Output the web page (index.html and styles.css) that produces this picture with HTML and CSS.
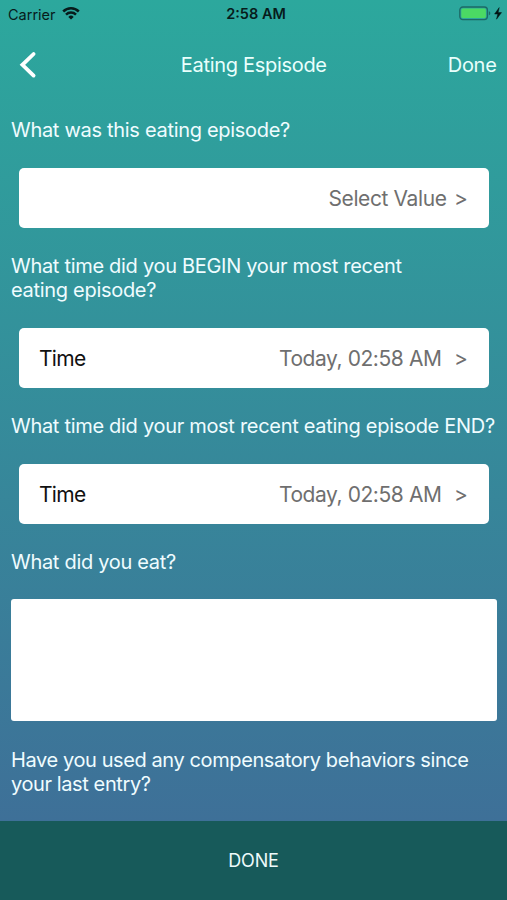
FILE: index.html
```html
<!DOCTYPE html>
<html lang="en">
<head>
<meta charset="utf-8">
<title>Eating Espisode</title>
<link rel="stylesheet" href="styles.css">
</head>
<body>
<div class="screen">
  <div class="status">
    <div class="status-left">
      <span class="carrier">Carrier</span>
      <svg class="wifi" width="18" height="13" viewBox="0 0 18 13" fill="none" stroke="#071b1b" stroke-width="2.5">
        <path d="M1.2 4.5a11.2 11.2 0 0 1 15.6 0"/>
        <path d="M4 7.6a7.2 7.2 0 0 1 10 0"/>
        <path d="M9 12.6 6.3 9.9a3.9 3.9 0 0 1 5.4 0z" fill="#071b1b" stroke="none"/>
      </svg>
    </div>
    <span class="clock">2:58 AM</span>
    <div class="status-right">
      <svg width="44" height="16" viewBox="0 0 44 16">
        <rect x=".8" y="1" width="27.6" height="12.6" rx="3" fill="none" stroke="#1d6965" stroke-width="1.3"/>
        <rect x="2.3" y="2.5" width="24.6" height="9.6" rx="1.5" fill="#4bd964"/>
        <path d="M29.8 5.3c2 .5 2 3.5 0 4z" fill="#1d6965"/>
        <path d="M40.2 1.6 35.6 8h3.2l-1.3 5.2 5-6.6h-3.4z" fill="#031414" stroke="#031414" stroke-width=".5"/>
      </svg>
    </div>
  </div>
  <header class="nav">
    <div class="back"><svg width="20" height="28" viewBox="0 0 20 28" fill="none" stroke="#fff" stroke-width="3.8" stroke-linecap="round"><path d="M15.6 3 4.4 13.8l11.2 10.8"/></svg></div>
    <h1 class="title">Eating Espisode</h1>
    <span class="nav-done">Done</span>
  </header>
  <main class="form">
    <p class="question">What was this eating episode?</p>
    <div class="card"><span></span><span class="value select"><span>Select Value</span><span>&gt;</span></span></div>
    <p class="question">What time did you BEGIN your most recent<br>eating episode?</p>
    <div class="card"><span class="name">Time</span><span class="value"><span>Today, 02:58 AM</span><span>&gt;</span></span></div>
    <p class="question">What time did your most recent eating episode END?</p>
    <div class="card"><span class="name">Time</span><span class="value"><span>Today, 02:58 AM</span><span>&gt;</span></span></div>
    <p class="question">What did you eat?</p>
    <div class="notes"></div>
    <p class="question last">Have you used any compensatory behaviors since<br>your last entry?</p>
  </main>
  <footer class="footer"><span>DONE</span></footer>
</div>
</body>
</html>
```

FILE: styles.css
```css
* { box-sizing: border-box; }
body { margin: 0; font-family: Inter, "Liberation Sans", sans-serif; }
.screen {
  display: flex;
  flex-direction: column;
  width: 507px;
  height: 900px;
  overflow: hidden;
  background: linear-gradient(#2ca89d 0, #3e7098 820px);
}
.status {
  display: grid;
  grid-template-columns: 1fr auto 1fr;
  align-items: center;
  height: 28px;
  padding: 0 4px 0 8px;
  color: #071b1b;
  font-size: 14.5px;
}
.status-left { display: flex; align-items: center; gap: 6px; }
.wifi { margin-top: -2px; }
.clock { font-weight: 600; margin-left: 1px; margin-top: -1px; }
.status-right { display: flex; justify-content: flex-end; }
.nav {
  display: grid;
  grid-template-columns: 1fr auto 1fr;
  align-items: center;
  height: 73px;
  padding: 0 10.5px 0 18px;
  color: #e9fffc;
  font-size: 20px;
  letter-spacing: -.3px;
}
.back { display: flex; }
.title { margin: 0 7px 0 0; font-size: 20px; font-weight: 400; }
.nav-done { text-align: right; }
.form { flex: 1; padding: 17px 10px 0 11px; }
.question {
  margin: 0;
  font-size: 20px;
  line-height: 24.2px;
  letter-spacing: -.3px;
  color: #effcff;
  white-space: nowrap;
}
.last { letter-spacing: -.4px; }
.card {
  display: flex;
  align-items: center;
  justify-content: space-between;
  height: 59.6px;
  margin: 26px 8px;
  padding: 1px 21.5px 0 20px;
  background: #fff;
  border-radius: 5px;
  font-size: 21px;
  letter-spacing: -.42px;
}
.name { color: #111; letter-spacing: -.7px; }
.value { display: flex; gap: 12.5px; color: #6f6f6f; }
.select { gap: 7.5px; letter-spacing: -.4px; }
.notes { height: 122px; margin: 25.4px 0 26.6px; background: #fff; border-radius: 3px; }
.footer {
  display: flex;
  align-items: center;
  justify-content: center;
  height: 79px;
  background: #175a5a;
  color: #eefafa;
  font-size: 18px;
  letter-spacing: -.2px;
}
```
